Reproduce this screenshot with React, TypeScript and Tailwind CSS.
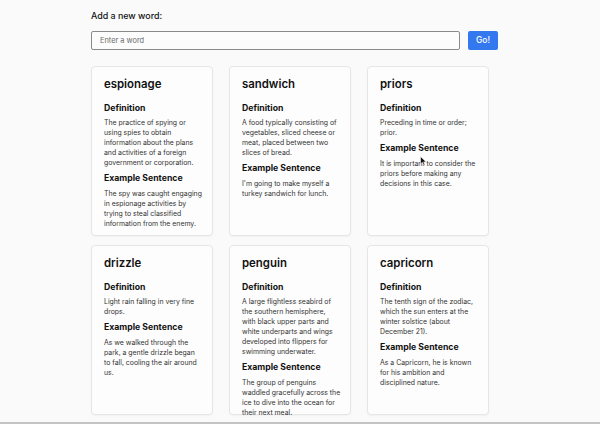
import { useState } from "react"

type Word = {
  word: string
  definition: string[]
  example: string[]
}

// lines are split by hand so the wrapping matches the narrow cards
const words: Word[] = [
  {
    word: "espionage",
    definition: [
      "The practice of spying or",
      "using spies to obtain",
      "information about the plans",
      "and activities of a foreign",
      "government or corporation.",
    ],
    example: [
      "The spy was caught engaging",
      "in espionage activities by",
      "trying to steal classified",
      "information from the enemy.",
    ],
  },
  {
    word: "sandwich",
    definition: [
      "A food typically consisting of",
      "vegetables, sliced cheese or",
      "meat, placed between two",
      "slices of bread.",
    ],
    example: ["I'm going to make myself a", "turkey sandwich for lunch."],
  },
  {
    word: "priors",
    definition: ["Preceding in time or order;", "prior."],
    example: ["It is important to consider the", "priors before making any", "decisions in this case."],
  },
  {
    word: "drizzle",
    definition: ["Light rain falling in very fine", "drops."],
    example: [
      "As we walked through the",
      "park, a gentle drizzle began",
      "to fall, cooling the air around",
      "us.",
    ],
  },
  {
    word: "penguin",
    definition: [
      "A large flightless seabird of",
      "the southern hemisphere,",
      "with black upper parts and",
      "white underparts and wings",
      "developed into flippers for",
      "swimming underwater.",
    ],
    example: [
      "The group of penguins",
      "waddled gracefully across the",
      "ice to dive into the ocean for",
      "their next meal.",
    ],
  },
  {
    word: "capricorn",
    definition: [
      "The tenth sign of the zodiac,",
      "which the sun enters at the",
      "winter solstice (about",
      "December 21).",
    ],
    example: ["As a Capricorn, he is known", "for his ambition and", "disciplined nature."],
  },
]

function Lines({ lines, className }: { lines: string[]; className: string }) {
  return (
    <p className={className}>
      {lines.map((l, i) => (
        <span key={i} className="block whitespace-nowrap">
          {l}
        </span>
      ))}
    </p>
  )
}

function WordCard({ item, cursor }: { item: Word; cursor?: boolean }) {
  return (
    <div className="relative h-[170px] rounded-[4px] border border-[#e6e6e6] bg-[#fdfdfd] px-[12px] pt-[9px] shadow-[0_1px_2px_rgba(0,0,0,0.04)]">
      <h2 className="text-[11.4px] font-semibold leading-[16px] text-[#111]">{item.word}</h2>
      <h3 className="mt-[10px] text-[8.7px] font-bold leading-[12px] text-[#111]">Definition</h3>
      <Lines lines={item.definition} className="mt-[4px] text-[6.9px] leading-[10px] text-[#333]" />
      <h3 className="mt-[4px] text-[8.7px] font-bold leading-[12px] text-[#111]">Example Sentence</h3>
      <Lines lines={item.example} className="mt-[5px] text-[6.9px] leading-[10px] text-[#333]" />
      {cursor && (
        <svg className="absolute left-[52px] top-[89px]" width="7" height="10" viewBox="0 0 7 10">
          <path
            d="M0.5 0.5 L0.5 8 L2.4 6.3 L3.7 9.2 L4.9 8.7 L3.7 5.9 L6.2 5.9 Z"
            fill="#111"
            stroke="#fff"
            strokeWidth="0.6"
          />
        </svg>
      )}
    </div>
  )
}

export default function App() {
  const [value, setValue] = useState("")

  return (
    <div
      className="relative flex h-[424px] w-[600px] flex-col overflow-hidden bg-[#fafafa]"
      style={{ fontFamily: "Inter, 'Noto Sans', sans-serif" }}
    >
      <div className="ml-[91px] w-[407px] pt-[10px]">
        <p className="text-[8.9px] font-medium leading-[12px] text-[#111]">Add a new word:</p>
        <form
          className="mt-[9px] flex gap-[8px]"
          onSubmit={(e) => {
            e.preventDefault()
            setValue("")
          }}
        >
          <input
            value={value}
            onChange={(e) => setValue(e.target.value)}
            placeholder="Enter a word"
            className="h-[19px] flex-1 rounded-[2px] border border-[#8a8a8a] bg-[#fcfcfc] px-[8px] text-[7.4px] text-[#111] outline-none placeholder:text-[#6b6b6b]"
          />
          <button
            type="submit"
            className="h-[19px] w-[30px] rounded-[2px] bg-[#3478f0] text-[8.5px] font-medium text-white"
          >
            Go!
          </button>
        </form>
        <div className="mt-[16px] grid w-[398px] grid-cols-3 gap-x-[16px] gap-y-[9px]">
          {words.map((w) => (
            <WordCard key={w.word} item={w} cursor={w.word === "priors"} />
          ))}
        </div>
      </div>
      <div className="absolute bottom-0 left-0 h-[2px] w-full bg-[#c4c4c4]" />
    </div>
  )
}
